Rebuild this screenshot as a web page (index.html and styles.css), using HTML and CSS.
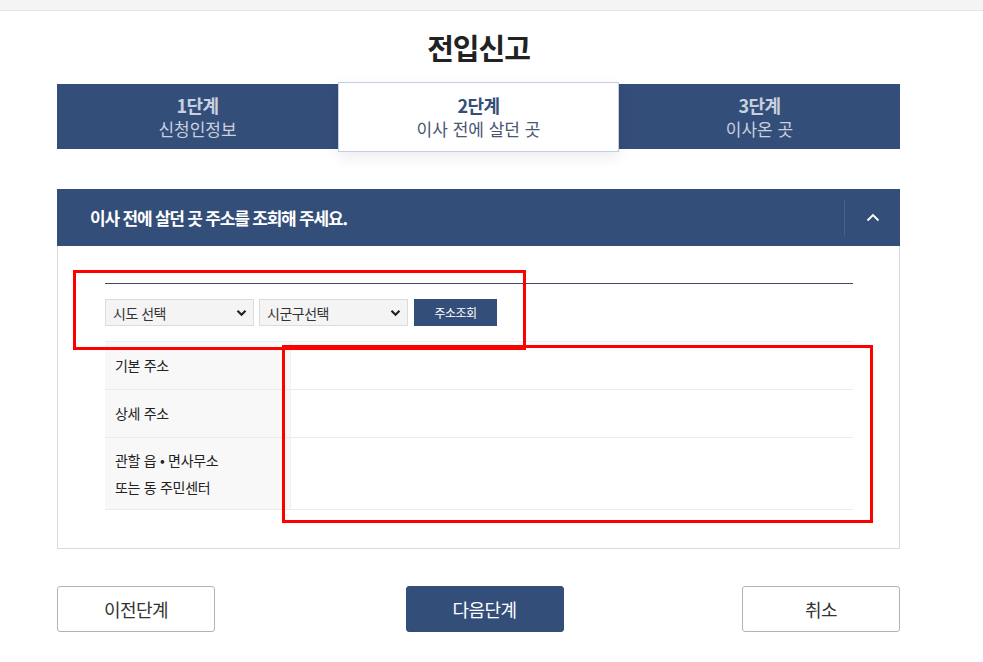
FILE: index.html
```html
<!DOCTYPE html>
<html lang="ko">
<head>
<meta charset="utf-8">
<title>전입신고</title>
<link rel="stylesheet" href="styles.css">
</head>
<body>
<div class="topbar"></div>
<main class="page">
  <h1 class="title">전입신고</h1>
  <ol class="steps">
    <li class="step"><strong>1단계</strong><span>신청인정보</span></li>
    <li class="step active"><strong>2단계</strong><span>이사 전에 살던 곳</span></li>
    <li class="step"><strong>3단계</strong><span>이사온 곳</span></li>
  </ol>

  <section class="card">
    <header class="card-head">
      <h2>이사 전에 살던 곳 주소를 조회해 주세요.</h2>
      <button class="toggle" aria-label="접기">
        <svg width="14" height="9" viewBox="0 0 14 9"><path d="M1.5 7.5 L7 2 L12.5 7.5" fill="none" stroke="#fff" stroke-width="1.8"/></svg>
      </button>
    </header>
    <div class="card-body">
      <div class="search">
        <div class="select-wrap">
          <select class="sel"><option>시도 선택</option></select>
          <svg class="arrow" width="11" height="8" viewBox="0 0 11 8"><path d="M1.5 1.8 L5.5 5.8 L9.5 1.8" fill="none" stroke="#222" stroke-width="2.2"/></svg>
        </div>
        <div class="select-wrap">
          <select class="sel"><option>시군구선택</option></select>
          <svg class="arrow" width="11" height="8" viewBox="0 0 11 8"><path d="M1.5 1.8 L5.5 5.8 L9.5 1.8" fill="none" stroke="#222" stroke-width="2.2"/></svg>
        </div>
        <button class="btn-search">주소조회</button>
      </div>
      <table class="addr">
        <tr><th>기본 주소</th><td></td></tr>
        <tr><th>상세 주소</th><td></td></tr>
        <tr class="tall"><th>관할 읍 • 면사무소<br>또는 동 주민센터</th><td></td></tr>
      </table>
    </div>
  </section>

  <div class="actions">
    <button class="btn btn-line">이전단계</button>
    <button class="btn btn-primary">다음단계</button>
    <button class="btn btn-line">취소</button>
  </div>
</main>
<div class="mark mark-1"></div>
<div class="mark mark-2"></div>
</body>
</html>
```

FILE: styles.css
```css
* { box-sizing: border-box; }
body {
  margin: 0;
  background: #fff;
  font-family: "Noto Sans CJK KR", "Noto Sans", sans-serif;
  color: #222;
  position: relative;
  min-height: 662px;
}
.topbar {
  height: 11px;
  background: #f5f4f5;
  border-bottom: 1px solid #e6e6e6;
}
.page {
  width: 843px;
  margin: 0 0 0 57px;
}
.title {
  margin: 0;
  padding-top: 11px;
  height: 73px;
  line-height: 50px;
  text-align: center;
  font-size: 29px;
  font-weight: 700;
  letter-spacing: -1px;
  color: #222;
}
.steps {
  list-style: none;
  margin: 0;
  padding: 0;
  display: grid;
  grid-template-columns: repeat(3, 1fr);
  height: 65px;
  background: #344e7a;
}
.step {
  display: flex;
  flex-direction: column;
  align-items: center;
  justify-content: center;
  color: #c9d0df;
}
.step strong {
  font-size: 18px;
  font-weight: 700;
  line-height: 23px;
  letter-spacing: -0.5px;
}
.step span {
  font-size: 17px;
  line-height: 23px;
}
.step.active {
  background: #fff;
  color: #344e7a;
  border: 1px solid #c6cde0;
  margin: -2px 0 -3px;
  box-shadow: 0 5px 14px rgba(0, 0, 0, 0.08);
  position: relative;
}
.step.active span { color: #4a5570; }
.card {
  margin-top: 40px;
}
.card-head {
  height: 57px;
  background: #344e7a;
  display: flex;
  align-items: center;
  padding-left: 33px;
}
.card-head h2 {
  flex: 1;
  margin: 0;
  font-size: 17px;
  font-weight: 700;
  color: #fff;
  letter-spacing: -1.2px;
}
.toggle {
  width: 56px;
  height: 36px;
  border: 0;
  border-left: 1px solid #4a6190;
  background: transparent;
  display: flex;
  align-items: center;
  justify-content: center;
  padding: 0;
}
.card-body {
  border: 1px solid #d9d9d9;
  border-top: 0;
  padding: 37px 46px 38px 47px;
}
.search {
  border-top: 1px solid #3d4a66;
  padding: 15px 0;
  display: flex;
  gap: 5px;
}
.select-wrap {
  position: relative;
  width: 149px;
  height: 27px;
}
.sel {
  appearance: none;
  -webkit-appearance: none;
  width: 100%;
  height: 100%;
  border: 1px solid #dcdcdc;
  background: #f4f4f4;
  font-family: inherit;
  font-size: 14px;
  letter-spacing: -0.5px;
  color: #333;
  padding: 0 0 0 7px;
  border-radius: 0;
}
.arrow {
  position: absolute;
  right: 7px;
  top: 10px;
  pointer-events: none;
}
.btn-search {
  width: 83px;
  height: 27px;
  margin-left: 1px;
  border: 0;
  background: #344e7a;
  color: #fff;
  font-family: inherit;
  font-size: 12px;
  letter-spacing: -0.5px;
}
.addr {
  width: 100%;
  border-collapse: collapse;
  border-top: 1px solid #eeeeee;
}
.addr tr { border-bottom: 1px solid #ebebeb; height: 48px; }
.addr tr.tall { height: 72px; }
.addr th {
  width: 185px;
  background: #f8f8f8;
  border-right: 1px solid #efefef;
  text-align: left;
  font-weight: 400;
  font-size: 14px;
  line-height: 27px;
  padding: 0 0 0 10px;
  letter-spacing: -0.3px;
  color: #222;
  white-space: nowrap;
}
.addr td { background: #fff; }
.actions {
  margin-top: 37px;
  display: flex;
  justify-content: space-between;
}
.btn {
  width: 158px;
  height: 46px;
  border-radius: 3px;
  font-family: inherit;
  font-size: 18px;
  letter-spacing: -0.5px;
}
.btn-line {
  background: #fff;
  border: 1px solid #b3b3b3;
  color: #333;
}
.btn-primary {
  margin-left: 12px;
  background: #344e7a;
  border: 1px solid #344e7a;
  color: #fff;
}
.mark {
  position: absolute;
  border: 3px solid #ff0000;
  pointer-events: none;
}
.mark-1 { left: 73px; top: 270px; width: 453px; height: 80px; }
.mark-2 { left: 282px; top: 345px; width: 591px; height: 178px; }
```
